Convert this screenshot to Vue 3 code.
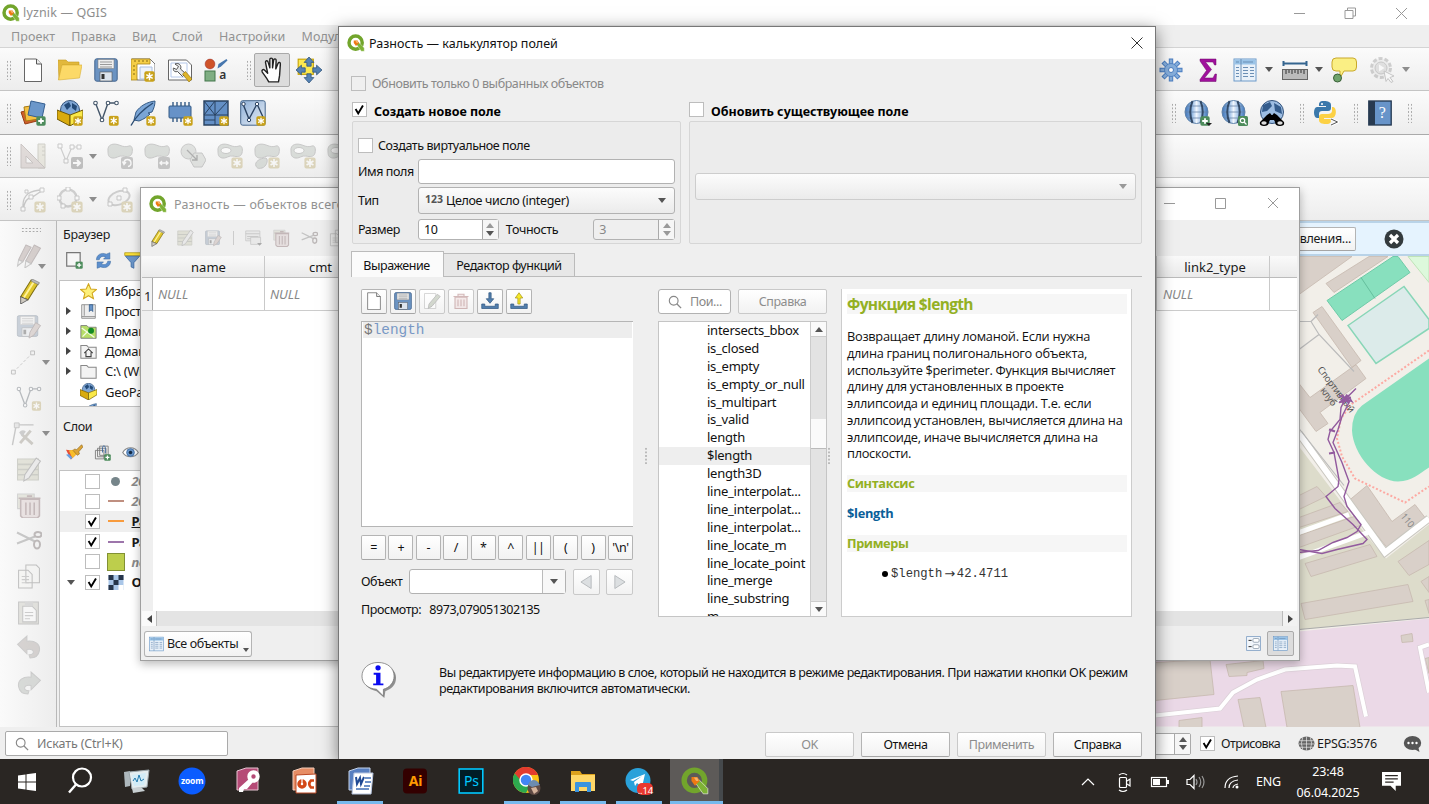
<script setup>
const menu = ['Проект', 'Правка', 'Вид', 'Слой', 'Настройки', 'Модули']
const fileTools = ['page', 'folder', 'save', 'layoutnew', 'layoutman', 'style']
const sourceTools = ['layers', 'gpkg', 'vnew', 'feather', 'chip', 'mesh', 'vlayer']
const shapeTools = ['blobrot', 'blobarr', 'simplify', 'blobring', 'blobpart', 'blobring', 'blobring']
const sideTools = [
  { id: 'pencils', off: true, menu: 'corner' },
  { id: 'pencil' },
  { id: 'saveedit', off: true },
  { id: 'segment', off: true, menu: 'arrow' },
  { id: 'vnew', off: true },
  { id: 'tools', off: true, menu: 'arrow' },
  { id: 'formedit', off: true },
  { id: 'trash', off: true },
  { id: 'cut', off: true },
  { id: 'copy', off: true },
  { id: 'paste', off: true },
  { id: 'undo', off: true },
  { id: 'redo', off: true },
]
const browser = [
  { id: 'star', name: 'Избранное' },
  { id: 'bookmark', name: 'Пространственные', open: true },
  { id: 'mapfolder', name: 'Домашняя', open: true },
  { id: 'home', name: 'Домашняя', open: true },
  { id: 'dir', name: 'C:\\ (Windows)', open: true },
  { id: 'gpkg', name: 'GeoPackage' },
]
const layers = [
  { name: '2024', kind: 'dot', off: true },
  { name: '2024', kind: 'brown', off: true },
  { name: 'Разность', kind: 'orange', on: true, cur: true },
  { name: 'Разность', kind: 'purple', on: true },
  { name: 'поле', kind: 'fill', off: true },
  { name: 'OSM', kind: 'raster', on: true, tree: true },
]
const tableTools = ['pencil', 'formedit', 'saveedit', '|', 'tablemenu', 'trash', 'cut', 'copy']
const exprTools = [
  { id: 'page' }, { id: 'save' }, { id: 'formpen', off: true },
  { id: 'bin', off: true }, { id: 'import' }, { id: 'export' },
]
const operators = ['=', '+', '-', '/', '*', '^', '||', '(', ')', "'\\n'"]
const functions = ['intersects_bbox', 'is_closed', 'is_empty', 'is_empty_or_null', 'is_multipart', 'is_valid', 'length', '$length', 'length3D', 'line_interpolat...', 'line_interpolat...', 'line_interpolat...', 'line_locate_m', 'line_locate_point', 'line_merge', 'line_substring', 'm']
const helpLines = ['Возвращает длину ломаной. Если нужна', 'длина границ полигонального объекта,', 'используйте $perimeter. Функция вычисляет', 'длину для установленных в проекте', 'эллипсоида и единиц площади. Т.е. если', 'эллипсоид установлен, вычисляется длина на', 'эллипсоиде, иначе вычисляется длина на', 'плоскости.']
const tasks = [
  { id: 't-search' }, { id: 't-monitor' }, { id: 't-zoom', cap: 'zoom' }, { id: 't-access' }, { id: 't-ppt' },
  { id: 't-word', run: true }, { id: 't-ai', cap: 'Ai' }, { id: 't-ps', cap: 'Ps' }, { id: 't-chrome', run: true },
  { id: 't-folder', run: true }, { id: 't-telegram', run: true, cap: '..14' }, { id: 'qgis', run: true, active: true },
]
</script>

<template>
  <div class="desktop">
    <svg class="defs" width="0" height="0">
      <defs>
        <linearGradient id="gbox" x1="0" y1="0" x2="1" y2="1"><stop offset="0" stop-color="#8fb0d8" /><stop offset="1" stop-color="#e8eef5" /></linearGradient>
        <linearGradient id="gglobe" x1="0" y1="0" x2="1" y2="0"><stop offset="0" stop-color="#3f74b8" /><stop offset=".3" stop-color="#8db5e2" /><stop offset=".5" stop-color="#f0f6fd" /><stop offset=".75" stop-color="#8db5e2" /><stop offset="1" stop-color="#3f74b8" /></linearGradient>
      </defs>
      <symbol id="badge" viewBox="0 0 9 9"><rect x=".3" y=".3" width="8.4" height="8.4" rx="1.500" fill="#c9a21a" /><path d="M4.500 1.500v6M1.900 3l5.200 3M7.100 3L1.900 6" stroke="#fff" stroke-width="1.200" /></symbol>
      <symbol id="plus" viewBox="0 0 9 9"><rect x=".3" y=".3" width="8.4" height="8.4" rx="1.500" fill="#4d8c5c" /><path d="M4.500 2v5M2 4.500h5" stroke="#fff" stroke-width="1.600" /></symbol>
      <symbol id="qgis" viewBox="0 0 24 24"><circle cx="11.500" cy="11.500" r="8.800" fill="none" stroke="#72a52c" stroke-width="4.600" /><path d="M12 13l3-2.500 8 8v4.500h-4z" fill="#7fb336" stroke="#fff" stroke-width=".5" /><path d="M9 8.500h5l2 3.500-4 4-3-4z" fill="#ee7913" /><path d="M11 9h3l1 3h-2z" fill="#f6b26b" /></symbol>
      <symbol id="page" viewBox="0 0 24 24"><path d="M3.500 1h12l5 5v17.500h-17z" fill="#fff" stroke="#666" /><path d="M15.500 1v5h5" fill="#eee" stroke="#555" /></symbol>
      <symbol id="folder" viewBox="0 0 24 24"><path d="M0 2h8l2 2h11v3H4L1 22z" fill="#e2b83c" stroke="#c79a20" stroke-width=".6" /><path d="M4 7h20l-2.500 13L.5 22z" fill="#fcd967" stroke="#d9ae34" stroke-width=".6" /></symbol>
      <symbol id="save" viewBox="0 0 24 24"><rect x=".8" y=".8" width="22.400" height="22.400" rx="2" fill="#6b93c2" stroke="#44668f" /><rect x="4" y="1.500" width="16" height="9" fill="#eee" stroke="#777" stroke-width=".5" /><path d="M6 4h12M6 6.500h12M6 9h12" stroke="#999" /><rect x="6" y="14" width="12" height="9" fill="#dce4ee" stroke="#555" stroke-width=".6" /><rect x="7.500" y="16" width="3" height="5" fill="#333" /></symbol>
      <symbol id="layoutnew" viewBox="0 0 24 24"><path d="M1 1h18l5 5v16H6z" fill="#fff" stroke="#777" /><path d="M0 1h19v5H6v16H0z" fill="#f5ce46" stroke="#a98518" stroke-width=".8" /><path d="M4 2v2M8 2v2M12 2v2M16 2v2M2 8h2M2 12h2M2 16h2" stroke="#866a13" /><path d="M9 9h12v12H9z" fill="#eef3fb" stroke="#aac0e2" /><use href="#badge" x="13" y="13" width="11" height="11" /></symbol>
      <symbol id="layoutman" viewBox="0 0 24 24"><path d="M.5 2h18l5 5v15H.5z" fill="#fff" stroke="#666" /><path d="M3 5h16v14H3z" fill="#fff" stroke="#b5c8ea" /><path d="M7 6c4-2 7 2 5.500 5l5 4.500-3 3-5-5c-4 1-4.500-2-4-3.500l3 1.500 2-3z" fill="#e6e8ea" stroke="#444" stroke-width=".9" /><path d="M14.500 16l3-2.500 6.500 7.500-3 3z" fill="#dfb52a" stroke="#8d6c0b" stroke-width=".6" /></symbol>
      <symbol id="style" viewBox="0 0 24 24"><circle cx="6" cy="6" r="4.900" fill="#cf5329" stroke="#933" stroke-width=".5" /><path d="M13.500 10.500l1-4.500 8-5 1 1.500-6.500 6z" fill="#4777ae" /><rect x="1" y="13" width="10" height="10" fill="#7fae83" stroke="#43764b" /></symbol>
      <symbol id="hand" viewBox="0 0 24 24"><path d="M9 23c-2-4-4-6-6-9-1-2 1-3 2-2l3 3-2-10c0-2 2-2 2.500 0L10 10V2.500c0-2 2.500-2 2.500 0V10l1-7c.4-2 2.500-1.500 2.300.4L15.500 11l2-5c.8-1.700 2.600-1 2.200.8L19 17l-1 6z" fill="#fff" stroke="#222" stroke-width="1.300" stroke-linejoin="round" /></symbol>
      <symbol id="move" viewBox="0 0 24 24"><rect x="2" y="2" width="14" height="14" fill="#fce94f" stroke="#c4a000" /><path d="M12 0l4.500 5H14v3.500h-4V5H7.500zM12 24l4.500-5H14v-3.500h-4V19H7.500zM0 12l5-4.500V10h3.500v4H5v2.500zM24 12l-5-4.500V10h-3.500v4H19v2.500z" fill="#5583b5" stroke="#2f5379" stroke-width=".7" /></symbol>
      <symbol id="layers" viewBox="0 0 26 26"><path d="M1 12l12-3 4 12-12 3z" fill="#cf5f2b" stroke="#973f14" /><path d="M4 7l13-2 2 14-13 2z" fill="#f5c242" stroke="#a77a13" /><path d="M11 1l14 3-3 14-14-3z" fill="#6b97ca" stroke="#355f91" /><use href="#plus" x="16" y="16" width="10" height="10" /></symbol>
      <symbol id="gpkg" viewBox="0 0 26 26"><circle cx="13" cy="10" r="9.500" fill="#7fa6d4" stroke="#34547c" /><path d="M7 5l5-3 2 4-4 4zM15 3l5 3-1 5-4-3z" fill="#234a77" /><path d="M0 10l13 5v11L0 19z" fill="#d9ab0e" stroke="#6e5705" /><path d="M13 15l13-5v8l-13 8z" fill="#fae948" stroke="#6e5705" /></symbol>
      <symbol id="vnew" viewBox="0 0 26 26"><path d="M2.500 3L9 20l6-17h9" fill="none" stroke="#44566a" stroke-width="1.400" /><g fill="#fff" stroke="#44566a" stroke-width="1.100"><circle cx="2.500" cy="3" r="1.800" /><circle cx="9" cy="20" r="1.800" /><circle cx="15" cy="3" r="1.800" /><circle cx="23.500" cy="3" r="1.800" /></g><use href="#badge" x="15.500" y="15.500" width="10.500" height="10.500" /></symbol>
      <symbol id="feather" viewBox="0 0 26 26"><path d="M25 1C17 2 10 6 6 12l-2 8 5 1c5-2 8-4 11-7l-2-1 4-1c2-4 3-7 3-11z" fill="#7aa5d6" stroke="#345a85" /><path d="M1 25.500C6 16 12 10 23 3" fill="none" stroke="#2b4c73" stroke-width="1.400" /></symbol>
      <symbol id="chip" viewBox="0 0 26 26"><path d="M6 2v20M10 2v20M14 2v20M18 2v20M22 2v20" stroke="#345a85" stroke-width="1.400" /><rect x="2" y="6" width="22" height="12" rx="1" fill="#6792c8" stroke="#345a85" /></symbol>
      <symbol id="mesh" viewBox="0 0 26 26"><path d="M1 1h24v24H1z" fill="#638fc5" stroke="#28415f" stroke-width="1.400" /><path d="M1 15h24M12 1v24M1 1l11 14L25 1M12 1L1 15M1 20h11" stroke="#28415f" fill="none" /></symbol>
      <symbol id="vlayer" viewBox="0 0 26 26"><rect x=".7" y=".7" width="24.500" height="24.500" rx="2" fill="url(#gbox)" stroke="#45658b" /><path d="M3 4l6 15L17 4l6 13" fill="none" stroke="#2c4362" stroke-width="1.400" /><g fill="#fff" stroke="#2c4362"><circle cx="3.500" cy="4" r="1.700" /><circle cx="9" cy="20" r="1.700" /><circle cx="17" cy="4" r="1.700" /></g></symbol>
      <symbol id="ruler3" viewBox="0 0 26 26"><path d="M18 1h7v24H18z" fill="#d5cfa5" stroke="#8f8b66" /><path d="M22 4h3M22 8h3M22 12h3" stroke="#8f8b66" /><path d="M1 1v24h24z" fill="#c8a9a0" stroke="#8a6e66" /><path d="M6 13v7h7z" fill="#f5f5f5" stroke="#8a6e66" /></symbol>
      <symbol id="vmove" viewBox="0 0 26 26"><path d="M3 3l6 15 6-14h8" fill="none" stroke="#888" stroke-width="1.200" /><g fill="#fff" stroke="#777"><path d="M1 1h4v4H1zM7 16h4v4H7zM13 2h4v4h-4zM20 2h4v4h-4z" /></g><rect x="14" y="14" width="12" height="12" rx="2" fill="#666" /><path d="M16 20h7m-3-3l3 3-3 3" stroke="#fff" stroke-width="2" fill="none" /></symbol>
      <symbol id="blob" viewBox="0 0 26 26"><path d="M1 8C0 1 7 0 12 2s7 2 10 1 4 3 3 7-5 4-9 3-7 3-11 2-4-4-4-7z" fill="#a3b5a2" stroke="#777" /></symbol>
      <symbol id="blobrot" viewBox="0 0 26 26"><use href="#blob" width="26" height="26" /><rect x="14" y="14" width="12" height="12" rx="2" fill="#777" /><path d="M17 20a3.500 3.500 0 1 1 4 3.500M15.500 18.500l1.500 3 2-2.500" stroke="#fff" fill="none" stroke-width="1.400" /></symbol>
      <symbol id="blobarr" viewBox="0 0 26 26"><use href="#blob" width="26" height="26" /><rect x="14" y="14" width="12" height="12" rx="2" fill="#777" /><path d="M16 20h8M18 18l-2 2 2 2M22 18l2 2-2 2" stroke="#fff" fill="none" stroke-width="1.400" /></symbol>
      <symbol id="simplify" viewBox="0 0 26 26"><circle cx="8.500" cy="8.500" r="7.500" fill="#b3bdb0" stroke="#777" /><path d="M14 10h8l4 7-4 7h-8l-4-7z" fill="#b9c4b6" stroke="#777" /><path d="M7 7l10 10m0-5v5h-5" fill="none" stroke="#333" stroke-width="1.300" /></symbol>
      <symbol id="blobring" viewBox="0 0 26 26"><use href="#blob" width="26" height="26" /><ellipse cx="9" cy="7.500" rx="5" ry="3" fill="#fff" stroke="#777" /><use href="#badge" x="14" y="14" width="12" height="12" /></symbol>
      <symbol id="blobpart" viewBox="0 0 26 26"><use href="#blob" width="26" height="26" /><path d="M2 23c-2-4 4-8 10-8 3 2 0 9-4 10s-5 0-6-2z" fill="#a3b5a2" stroke="#777" /><use href="#badge" x="14" y="14" width="12" height="12" /></symbol>
      <symbol id="curve" viewBox="0 0 26 26"><path d="M3 24V18C3 8 10 3 23 3M3 22c2-8 4-11 8-11L23 3" fill="none" stroke="#777" stroke-width="1.300" /><path d="M1 20h4v4H1zM9 8h4v4H9zM20 1h4v4h-4zM5 3h3v3H5z" fill="#fff" stroke="#777" /><use href="#badge" x="14" y="14" width="12" height="12" /></symbol>
      <symbol id="circ" viewBox="0 0 26 26"><circle cx="11" cy="11" r="8.500" fill="#eee" stroke="#888" stroke-width="2.500" /><path d="M9 0h4v4H9zM0 9h4v4H0zM18 9h4v4h-4zM4 17h4v4H4z" fill="#fff" stroke="#777" /><use href="#badge" x="14" y="14" width="12" height="12" /></symbol>
      <symbol id="elli" viewBox="0 0 26 26"><ellipse cx="12" cy="11" rx="11" ry="6.500" transform="rotate(-20 12 11)" fill="#eee" stroke="#888" stroke-width="2" /><path d="M10 9h4v4h-4zM1 15h4v4H1zM16 1h4v4h-4z" fill="#fff" stroke="#777" /><use href="#badge" x="14" y="14" width="12" height="12" /></symbol>
      <symbol id="gear" viewBox="0 0 24 24"><path d="M12 .5v23M.5 12h23M4 4l16 16M20 4L4 20" stroke="#4a7dc0" stroke-width="4.400" /><path d="M12 1.500v21M1.500 12h21M4.700 4.700l14.600 14.600M19.300 4.700L4.700 19.300" stroke="#86aedb" stroke-width="2.600" /><circle cx="12" cy="12" r="6.500" fill="#86aedb" stroke="#4a7dc0" stroke-width=".8" /><circle cx="12" cy="12" r="2.500" fill="#fff" stroke="#4a7dc0" /></symbol>
      <symbol id="sigma" viewBox="0 0 24 24"><path d="M4 1h16v6h-1.500L17 4H9.500l6 7.500L8.500 20H17l2-4h1.500L20 23.500H4v-2l6.500-9L4 3z" fill="#a0109c" stroke="#6d0a6b" stroke-width=".5" /></symbol>
      <symbol id="table" viewBox="0 0 24 24"><rect x="1" y="1" width="22" height="22" fill="#e9f1f9" stroke="#6c9ac9" /><rect x="1.500" y="1.500" width="21" height="5" fill="#9ac4e8" /><path d="M8 1v22M3 4h3M10 4h10M3 9.500h3M10 9.500h5M17 9.500h4M3 12.500h3M10 12.500h5M17 12.500h4M3 15.500h3M10 15.500h5M17 15.500h4M3 18.500h3M10 18.500h5M17 18.500h4" stroke="#6b8fb5" /></symbol>
      <symbol id="measure" viewBox="0 0 26 24"><path d="M1 5.500h24M1.500 3v5M24.500 3v5" stroke="#34658f" stroke-width="2" /><rect x=".5" y="11.500" width="25" height="10" fill="#bbb" stroke="#666" /><path d="M4 12v4M7 12v3M10 12v4M13 12v3M16 12v4M19 12v3M22 12v4" stroke="#333" /></symbol>
      <symbol id="tip" viewBox="0 0 26 26"><path d="M5 1h17q3.500 0 3.500 4v5q0 4-3.500 4H13l-4 7v-7H5q-4 0-4-4V5q0-4 4-4z" fill="#faef84" stroke="#c9a92a" /><circle cx="6.500" cy="21" r="4" fill="#6fa36c" stroke="#3a6038" /></symbol>
      <symbol id="action" viewBox="0 0 26 26"><circle cx="12" cy="11" r="9.500" fill="#ddd" stroke="#888" stroke-width="3" stroke-dasharray="4 2" /><circle cx="12" cy="11" r="6" fill="#bbb" stroke="#777" /><path d="M10 7.500l5.500 3.500-5.500 3.500z" fill="#fff" /><path d="M15 14l10 5-4 1.500 3 4-2 1-3-4-2 3z" fill="#fff" stroke="#777" /></symbol>
      <symbol id="globe" viewBox="0 0 26 26"><circle cx="12.500" cy="12" r="11.500" fill="url(#gglobe)" stroke="#5f83ab" /><path d="M3 6h19M1 12h23M3 18h19" stroke="#6a86a8" stroke-width=".8" fill="none" /><path d="M8.500 1.200q-4.500 10.800 0 21.600M16.500 1.200q4.500 10.800 0 21.600" fill="none" stroke="#334a66" stroke-width="2" /></symbol>
      <symbol id="globeadd" viewBox="0 0 28 26"><use href="#globe" width="26" height="26" /><use href="#plus" x="16" y="16" width="10" height="10" /><path d="M22 23h6l-3 3z" fill="#222" /></symbol>
      <symbol id="globefind" viewBox="0 0 28 26"><use href="#globe" width="26" height="26" /><rect x="17" y="16" width="10" height="10" rx="1.500" fill="#4d8c5c" /><circle cx="21.500" cy="20.500" r="2.200" fill="none" stroke="#fff" stroke-width="1.200" /><path d="M23 22l2.500 2.500" stroke="#fff" stroke-width="1.300" /></symbol>
      <symbol id="binoc" viewBox="0 0 26 26"><circle cx="13" cy="12" r="11.500" fill="#9dbde2" stroke="#31517a" /><path d="M4 5l7-3 2 4-5 5-5 1zM15 3l7 4 1 7-7-3z" fill="#345c8c" /><path d="M8 15l3-2 1.500 2h1L15 13l3 2 7 7q1 4-4 4t-5-4l-1-2h-4l-1 2q0 4-5 4t-4-4z" fill="#000" /><ellipse cx="5" cy="23" rx="2.700" ry="1.700" fill="#ddd" /><ellipse cx="21" cy="23" rx="2.700" ry="1.700" fill="#ddd" /></symbol>
      <symbol id="python" viewBox="0 0 26 26"><path d="M11 1c-5 0-5 2-5 5h7v1H4c-4 0-4 11 0 11h2v-4c0-2 1-3 3-3h6c2 0 3-1 3-3V5c0-3-3-4-7-4z" fill="#3a78ab" /><path d="M13 24c5 0 5-2 5-5h-7v-1h8c5 0 5-11 1-11h-1v4c0 2-2 3-4 3H9c-2 0-3 1-3 3v3c0 3 3 4 7 4z" fill="#fcd144" /><circle cx="9" cy="4" r="1" fill="#fff" /><path d="M18 19l6.500 3-6.500 3" fill="none" stroke="#fff" stroke-width="3" /><path d="M18 19l6.500 3-6.500 3" fill="none" stroke="#555" /></symbol>
      <symbol id="book" viewBox="0 0 24 26"><rect x=".8" y="1" width="22.400" height="24" fill="#6894c9" stroke="#22364e" stroke-width="1.300" /><rect x="1" y="1" width="6" height="24" fill="#283a50" /></symbol>
      <symbol id="pencil" viewBox="0 0 24 24"><path d="M14 1l7 3L11 20l-7-3z" fill="#e0c62c" stroke="#7d6d13" /><path d="M16.500 3L7 18" stroke="#fff29a" stroke-width="1.800" /><path d="M15 0l7 3.500-1 2-7-3.500z" fill="#bbb" stroke="#777" stroke-width=".6" /><path d="M4 17l7 3-7 4z" fill="#cfcac0" stroke="#555" stroke-width=".8" /></symbol>
      <symbol id="pencils" viewBox="0 0 24 24"><path d="M9 2l5 2-8 14-4-2zM17 2l6 3-9 15-5-3z" fill="#b18a80" stroke="#755" /><path d="M2 16l4 2-5 4zM9 17l5 3-6 4z" fill="#eee" stroke="#777" /></symbol>
      <symbol id="saveedit" viewBox="0 0 26 26"><use href="#save" x="0" y="1" width="23" height="23" /><path d="M20 9l5 3-7 10-5 3 1-6z" fill="#c9a095" stroke="#755" /></symbol>
      <symbol id="segment" viewBox="0 0 26 26"><path d="M3 23L23 3" stroke="#777" stroke-dasharray="3 2" /><path d="M1 21h4v4H1zM21 1h4v4h-4z" fill="#eee" stroke="#666" /></symbol>
      <symbol id="tools" viewBox="0 0 26 26"><path d="M2 25L6 4h18" fill="none" stroke="#777" stroke-width="1.500" /><path d="M4 2h5v5H4z" fill="#ccc" stroke="#777" /><path d="M12 14l11 10M21 10L10 23" stroke="#8f8468" stroke-width="3" /><path d="M9 12q3-4 7-1l-4 5z" fill="#888" /></symbol>
      <symbol id="formedit" viewBox="0 0 24 24"><path d="M1 2h20v20H1z" fill="#c4c592" stroke="#8b8f6d" /><path d="M1 7h20M1 12h20M1 17h20" stroke="#8b8f6d" stroke-width="1.600" /><path d="M19 1l4 3L12 20l-5 3 1-6z" fill="#ddd" stroke="#666" /></symbol>
      <symbol id="formpen" viewBox="0 0 24 24"><path d="M2 2h15v20H2z" fill="#fff" stroke="#999" /><path d="M19 3l4 3L12 19l-5 3 1-6z" fill="#aeb8a5" stroke="#777" /></symbol>
      <symbol id="trash" viewBox="0 0 24 24"><path d="M1 1h16v14H1z" fill="#c9cda4" stroke="#999" /><path d="M4 6h18v16l-2 2H6l-2-2zM2 5h21M10 3h5" fill="#e3bdbd" stroke="#8f4f55" stroke-width="1.500" /><path d="M9 9v12M13 9v12M17 9v12" stroke="#8f4f55" stroke-width="1.500" /></symbol>
      <symbol id="bin" viewBox="0 0 24 24"><path d="M4 7h16v15H4zM2 6h20M8 6V3h8v3" fill="#efdada" stroke="#a77" stroke-width="1.500" /><path d="M8 10v9M12 10v9M16 10v9" stroke="#a77" stroke-width="1.500" /></symbol>
      <symbol id="cut" viewBox="0 0 26 24"><path d="M1 4l18 9M1 15l18-7" stroke="#777" stroke-width="2" /><ellipse cx="22" cy="6" rx="3.500" ry="2.500" fill="none" stroke="#6c5555" stroke-width="2" /><ellipse cx="21" cy="16" rx="3" ry="4" fill="none" stroke="#6c5555" stroke-width="2" /></symbol>
      <symbol id="copy" viewBox="0 0 24 24"><path d="M9 1h10l3 3v14H9zM2 6h9l4 4v13H2z" fill="#f5f5ef" stroke="#666" /><path d="M5 12h7M5 15h7M5 18h7" stroke="#888" /></symbol>
      <symbol id="paste" viewBox="0 0 24 24"><path d="M2 2h19v21H2z" fill="#c5c2ac" stroke="#777" /><path d="M6 6h9l4 4v11H6z" fill="#fff" stroke="#777" /><path d="M8 2h8v4H8z" fill="#aaa" /><path d="M8 12h8M8 15h8M8 18h5" stroke="#888" /></symbol>
      <symbol id="undo" viewBox="0 0 24 24"><path d="M1 9L10 1v5c8-1 13 3 12 9s-5 7-9 7l-1-3c4 0 4.500-2 4-3.500s-3-2.500-6-1.500v4z" fill="#a8958c" stroke="#888" /></symbol>
      <symbol id="redo" viewBox="0 0 24 24"><path d="M23 9L14 1v5C6 5 1 9 2 15s5 7 9 7l1-3c-4 0-4.500-2-4-3.500s3-2.500 6-1.500v4z" fill="#a0ada0" stroke="#888" /></symbol>
      <symbol id="addlayer" viewBox="0 0 24 24"><path d="M1 1h19v19H1z" fill="#f6f6f6" stroke="#777" stroke-width="1.700" /><use href="#plus" x="13" y="13" width="11" height="11" /></symbol>
      <symbol id="refresh" viewBox="0 0 24 24"><path d="M2 11C2 4 9 0 16 3l5-2v9h-9l3-3c-5-2-8 0-9 4zM22 13c0 7-7 11-14 8l-5 2v-9h9l-3 3c5 2 8 0 9-4z" fill="#5c8fce" stroke="#34639c" stroke-width=".7" /></symbol>
      <symbol id="filter" viewBox="0 0 24 24"><path d="M1 1h22v4H1z" fill="#f8df39" stroke="#ab9410" /><path d="M2 6h20l-8 9v8l-4-2v-6z" fill="#6a94c7" stroke="#34639c" /></symbol>
      <symbol id="star" viewBox="0 0 20 20"><path d="M10 1l2.700 6 6.600.6-5 4.400 1.500 6.500L10 15l-5.800 3.500L5.700 12l-5-4.400 6.600-.6z" fill="#fdf07a" stroke="#d2a71f" stroke-width="1.300" /></symbol>
      <symbol id="bookmark" viewBox="0 0 20 20"><path d="M2 2h16v16H2z" fill="#eee" stroke="#888" /><path d="M5 2v13M2 16h16" stroke="#888" /><path d="M11 2h4v8l-2-2-2 2z" fill="#6794c9" stroke="#355d8c" /></symbol>
      <symbol id="mapfolder" viewBox="0 0 20 20"><path d="M1 3h7l2 2h9v13H1z" fill="#b7de68" stroke="#777" /><path d="M2 6l15 11M3 16l6-6" stroke="#f5fae8" stroke-width="1.500" /><circle cx="13" cy="9" r="3.500" fill="#148a25" /></symbol>
      <symbol id="dir" viewBox="0 0 20 20"><path d="M1 3h7l2 2h9v13H1z" fill="#f3f3f3" stroke="#888" stroke-width="1.200" /></symbol>
      <symbol id="home" viewBox="0 0 20 20"><use href="#dir" width="20" height="20" /><path d="M5 12l5-5 5 5M7 11v5h6v-5" fill="none" stroke="#444" stroke-width="1.300" /></symbol>
      <symbol id="brush" viewBox="0 0 24 24"><path d="M0 8l9 1 5 6-7 7z" fill="#e94e35" /><path d="M4 9l6-1 5 6-6 6z" fill="#f8bd2b" /><path d="M10 9l2-2 3 1L22 1l2 3-6 7 1 3-3 2z" fill="#dca436" stroke="#865d13" stroke-width=".8" /><path d="M0 15l4-1 5 5-2 3z" fill="#6a9fe0" /></symbol>
      <symbol id="group" viewBox="0 0 24 24"><path d="M2 9h12v12H2zM5 6h12v12H5zM8 3h12v13H8z" fill="#eee" stroke="#777" stroke-width="1.200" /><path d="M12 12V5c0-3 4-3 4 0v8" fill="none" stroke="#34639c" stroke-width="1.200" /><use href="#plus" x="14" y="14" width="10" height="10" /></symbol>
      <symbol id="eye" viewBox="0 0 24 24"><path d="M1 12c5-9 17-9 22 0-5 8-17 8-22 0z" fill="#fff" stroke="#888" stroke-width="1.500" /><circle cx="12" cy="12" r="5.500" fill="#6794c9" stroke="#34639c" /><circle cx="12" cy="12" r="2.500" fill="#152b44" /></symbol>
      <symbol id="tablemenu" viewBox="0 0 24 24"><path d="M1 2h20v14H1z" fill="#ddd" stroke="#777" /><path d="M1 6h20M3 10h16M3 13h16" stroke="#888" stroke-width="1.500" /><path d="M8 11h14v10H8z" fill="#ddd" stroke="#777" /><path d="M17 19h7l-3.500 4z" fill="#333" /></symbol>
      <symbol id="import" viewBox="0 0 24 24"><path d="M1 16h4v3h14v-3h4v6H1z" fill="#517ead" stroke="#335a83" /><path d="M10.500 1h3v8h3.500l-5 6-5-6h3.500z" fill="#517ead" stroke="#335a83" /></symbol>
      <symbol id="export" viewBox="0 0 24 24"><path d="M1 16h4v3h14v-3h4v6H1z" fill="#517ead" stroke="#335a83" /><path d="M10.500 16h3V8h3.500l-5-7-5 7h3.500z" fill="#f7e928" stroke="#a8971a" /></symbol>
      <symbol id="form" viewBox="0 0 24 24"><rect x="1" y="1" width="22" height="22" fill="#f2f6fb" stroke="#7c9dc2" stroke-width="1.300" /><rect x="11" y="4" width="10" height="6" rx="2" fill="#fff" stroke="#6d7f92" /><rect x="11" y="14" width="10" height="6" rx="2" fill="#fff" stroke="#6d7f92" /><path d="M4 7h5M4 17h5" stroke="#333" stroke-width="1.600" /></symbol>
      <symbol id="lens" viewBox="0 0 16 16"><circle cx="6.500" cy="6.500" r="5" fill="none" stroke="#888" stroke-width="1.300" /><path d="M10 10l5 5" stroke="#888" stroke-width="1.500" /></symbol>
      <symbol id="grayglobe" viewBox="0 0 18 16"><ellipse cx="9" cy="8" rx="8.500" ry="7.500" fill="#666" /><path d="M1 5h16M1 8.500h16M2 12h14M9 .5v15M5 1.500q-3 6 0 13M13 1.500q3 6 0 13" stroke="#eee" stroke-width=".7" fill="none" /></symbol>
      <symbol id="chat" viewBox="0 0 18 18"><ellipse cx="9" cy="8" rx="8.700" ry="7" fill="#555" /><path d="M9 13h6l1 4z" fill="#555" /><circle cx="5" cy="8" r="1.200" fill="#fff" /><circle cx="9" cy="8" r="1.200" fill="#fff" /><circle cx="13" cy="8" r="1.200" fill="#fff" /></symbol>

      <symbol id="t-search" viewBox="0 0 28 28"><circle cx="16" cy="10.500" r="9" fill="none" stroke="#fff" stroke-width="2.200" /><path d="M10 17.500l-7 8" stroke="#fff" stroke-width="2.400" /></symbol>
      <symbol id="t-monitor" viewBox="0 0 28 28"><path d="M2 5l6-1v15l-5 1z" fill="#aeb8bd" /><path d="M7 5l20-2-2 17-15 2z" fill="#e4edf0" stroke="#9aa5aa" /><path d="M10 8l14-2-2 12-10 1z" fill="#d2ecf7" /><path d="M11 14l2-3 2 4 2-7 2 6 3-2" fill="none" stroke="#237aae" /><path d="M10 21l9-1 4 4-12 2z" fill="#c8cfd2" /></symbol>
      <symbol id="t-zoom" viewBox="0 0 28 28"><circle cx="14" cy="14" r="13.500" fill="#0b5cff" /></symbol>
      <symbol id="t-access" viewBox="0 0 28 28"><path d="M3 4l9-3h12v22H3z" fill="#b54a76" stroke="#e8c5d3" /><circle cx="19.500" cy="9.500" r="4.200" fill="none" stroke="#fff" stroke-width="4" /><path d="M15 12L5 21v4h4l1-3h3l6-7z" fill="#fff" /></symbol>
      <symbol id="t-ppt" viewBox="0 0 28 28"><path d="M3 4l9-3h12v22H3z" fill="#e68d65" stroke="#f3cdbb" /><path d="M6 8l20-1v19H6z" fill="#fff" stroke="#bb4824" /><circle cx="12" cy="17" r="3" fill="none" stroke="#d34817" stroke-width="3.500" /><path d="M12 17V11" stroke="#fff" stroke-width="1.200" /><path d="M24 13.500h-3q-3.500 3.500 0 7h3" fill="none" stroke="#d34817" stroke-width="2.600" /></symbol>
      <symbol id="t-word" viewBox="0 0 28 28"><path d="M3 4l9-3h12v22H3z" fill="#587fc0" stroke="#c5d4ec" /><path d="M8 6h19l-2 21H6z" fill="#fff" stroke="#b6c5e0" /><path d="M10 10l1 7 3-6 1 6 3-7" fill="none" stroke="#204a94" stroke-width="2" /><path d="M19 11h6M19 15h6M18 19h6M10 22h13" stroke="#3f6db5" stroke-width="1.600" /></symbol>
      <symbol id="t-ai" viewBox="0 0 28 28"><rect x="2" y="1.500" width="24" height="25" rx="4" fill="#330000" /></symbol>
      <symbol id="t-ps" viewBox="0 0 28 28"><rect x="2.200" y="2" width="23.600" height="24" fill="#001d26" stroke="#00c8ff" stroke-width="1.600" /></symbol>
      <symbol id="t-chrome" viewBox="0 0 28 28"><circle cx="13" cy="13" r="13" fill="#fbc116" /><path d="M1.700 6.500A13 13 0 0 1 25 8H13l-5 9z" fill="#e33b2e" /><path d="M1.700 6.500A13 13 0 0 0 13 26l5-9-6 1z" fill="#2da94f" /><circle cx="13" cy="13" r="6" fill="#4285f4" stroke="#fff" stroke-width="1.500" /><ellipse cx="21" cy="21" rx="6.500" ry="7" fill="#5f4a44" /><path d="M15 18q3-7 9-4l3 4-8 2z" fill="#6d8cb0" /><path d="M18 21l5-1 2 4-4 3z" fill="#d5b49d" /></symbol>
      <symbol id="t-folder" viewBox="0 0 28 28"><path d="M2 4h9l2 3h13v5H2z" fill="#dda21e" /><path d="M2 8h24v16H2z" fill="#ffd768" /><path d="M6 25v-9q0-1 1-1h14q1 0 1 1v9h-4v-5h-8v5z" fill="#3b94df" /></symbol>
      <symbol id="t-telegram" viewBox="0 0 28 28"><circle cx="13" cy="13.500" r="12.500" fill="#2aa1da" /><path d="M5 13l15-6-3 13-5-4-2 3-1-4 8-6-9 5z" fill="#fff" /><rect x="12" y="16" width="16" height="12" rx="5" fill="#e8382f" /></symbol>
    </svg>

    <section class="main">
      <header class="mtitle">
        <svg class="q18"><use href="#qgis" /></svg><span class="mt">lyznik — QGIS</span>
        <svg class="winctl" viewBox="0 0 130 24"><path d="M8 12.500h11M110 7l11 11M121 7l-11 11M59 9.500h8v8h-8zM61.500 9.500v-2.500h8v8h-2.500" fill="none" stroke="#999" /></svg>
      </header>
      <nav class="menu"><span v-for="m in menu" :key="m">{{ m }}</span></nav>

      <div class="bar r1">
        <i class="grip" />
        <span v-for="t in fileTools" :key="t" class="slot"><svg><use :href="'#' + t" /></svg><small v-if="t === 'style'" class="glyph-a">a</small></span>
        <i class="grip g2" />
        <span class="slot pressed"><svg class="big"><use href="#hand" /></svg></span>
        <span class="slot"><svg class="big"><use href="#move" /></svg></span>
        <span class="slot late"><svg><use href="#pencil" /></svg></span>
        <div class="right">
          <span class="slot"><svg><use href="#gear" /></svg></span>
          <span class="slot"><svg><use href="#sigma" /></svg></span>
          <span class="slot"><svg><use href="#table" /></svg></span><b class="dd" />
          <span class="slot"><svg class="big"><use href="#measure" /></svg></span><b class="dd" />
          <span class="slot"><svg class="big"><use href="#tip" /></svg></span>
          <span class="slot off"><svg class="big"><use href="#action" /></svg></span><b class="dd dim" />
        </div>
      </div>
      <div class="bar r2">
        <i class="grip" />
        <span v-for="t in sourceTools" :key="t" class="slot"><svg class="big"><use :href="'#' + t" /><use v-if="!['layers', 'vnew'].includes(t)" href="#badge" x="16" y="16" width="10" height="10" /></svg></span>
        <div class="right">
          <i class="grip" />
          <span class="slot"><svg class="huge"><use href="#globeadd" /></svg></span>
          <span class="slot"><svg class="huge"><use href="#globefind" /></svg></span>
          <span class="slot"><svg class="huge"><use href="#binoc" /></svg></span>
          <i class="grip" /><span class="slot"><svg class="big"><use href="#python" /></svg></span>
          <i class="grip" /><span class="slot"><svg class="big"><use href="#book" /></svg><small class="glyph-q">?</small></span>
          <i class="grip" />
        </div>
      </div>
      <div class="bar r3">
        <i class="grip" />
        <span class="slot off"><svg class="big"><use href="#ruler3" /></svg></span>
        <span class="slot off"><svg class="big"><use href="#vmove" /></svg></span><b class="dd dim" />
        <span v-for="(t, i) in shapeTools" :key="i" class="slot off"><svg class="big"><use :href="'#' + t" /></svg></span>
      </div>
      <div class="bar r4">
        <i class="grip" />
        <span class="slot off"><svg class="big"><use href="#curve" /></svg></span>
        <span class="slot off"><svg class="big"><use href="#circ" /></svg></span><b class="dd dim" />
        <span class="slot off"><svg class="big"><use href="#elli" /></svg></span>
      </div>

      <div class="work">
        <aside class="side">
          <i class="hgrip" />
          <span v-for="s in sideTools" :key="s.id" class="st" :class="s.menu">
            <svg :class="{ faint: s.off }"><use :href="'#' + s.id" /></svg><b v-if="s.menu" class="dd dim" />
          </span>
        </aside>
        <div class="panels">
          <h4>Браузер</h4>
          <div class="ptools"><svg><use href="#addlayer" /></svg><svg><use href="#refresh" /></svg><svg><use href="#filter" /></svg></div>
          <ul class="tree">
            <li v-for="(b, i) in browser" :key="i"><b class="rt" :class="{ none: !b.open }" /><svg><use :href="'#' + b.id" /></svg>{{ b.name }}</li>
            <li><b class="rt none" /><svg><use href="#feather" /></svg></li>
          </ul>
          <h4 class="lh">Слои</h4>
          <div class="ptools two"><svg><use href="#brush" /></svg><svg><use href="#group" /></svg><svg><use href="#eye" /></svg></div>
          <ul class="layers">
            <li v-for="(l, i) in layers" :key="i" :class="{ cur: l.cur, gone: l.off }">
              <b class="dd" :class="{ none: !l.tree }" /><i class="ck"><svg v-if="l.on" viewBox="0 0 15 15"><path d="M3 7l3 5 5.500-9" /></svg></i>
              <svg v-if="l.kind === 'raster'" class="sym" viewBox="0 0 15 15"><path d="M0 0h15v15H0z" fill="#a9c6e8" /><path d="M0 0h5v5H0zM10 0h5v5h-5zM5 5h5v5H5zM0 10h5v5H0z" fill="#26354a" /><path d="M10 10h5v5h-5z" fill="#fff" /></svg>
              <i v-else class="sym" :class="l.kind" /><span>{{ l.name }}</span>
            </li>
          </ul>
        </div>
        <div class="canvas">
          <div class="msg"><button>Обновления...</button><svg viewBox="0 0 20 20"><circle cx="10" cy="10" r="9.500" fill="#333a3d" /><path d="M6 6l8 8M14 6l-8 8" stroke="#fff" stroke-width="3.200" /></svg></div>
          <svg class="map" viewBox="1155 257 274 470">
            <path d="M1155 257h274v470h-274z" fill="#f2efe9" />
            <path d="M1408 257h21v26z" fill="#ddf9dc" stroke="#bfe3b8" />
            <path d="M1299 447l70 92 17 20 43-34v93l-130 12z" fill="#dddccb" />
            <g fill="#d9d0c9" stroke="#c6b9af" stroke-width=".8">
              <path d="M1299 257h53l-53 38zM1326 284l43-27h19l-54 36zM1313 313l9-6 39 54-9 7zM1356 365l10 14-46 34 8 11-12 8-17-23v-25l11 14zM1349 501l18-15 25 36 23-17 10 13-38 30zM1299 496l18-9 9 10-27 13zM1299 518l41-15 8 9-49 16zM1299 536l58-20 6 9-64 23zM1305 564l65-19 7 12-66 20zM1301 604l107-19 5 17-108 18zM1398 562l31-21v24l-20 11zM1421 582l8-5v16zM1425 601l4-1v14z" />
            </g>
            <path d="M1299 434l86 119 44-34" fill="none" stroke="#cac8c0" stroke-width="8" /><path d="M1299 434l86 119 44-34" fill="none" stroke="#fff" stroke-width="6" />
            <path d="M1299 533l50-18M1299 558l69-25" stroke="#fff" stroke-width="5" />
            <path d="M1299 322h12l8 13 35 37M1311 322l7-7M1299 350l20-15M1299 429l45 57" fill="none" stroke="#bbb" stroke-width="1.200" />
            <path d="M1327 301l66-44h5l12 16-68 48z" fill="#88e0be" stroke="#70cba9" /><path d="M1361 278l14 21" stroke="#65bf9d" />
            <path d="M1348 326l56-39 25 33v9l-53 35z" fill="#dcebea" stroke="#88d6b7" stroke-width="1.500" />
            <path d="M1429 359l-67 47q-10 8-10 25c1 24 25 51 46 51 15-1 20-7 31-14z" fill="#88e0be" />
            <path d="M1429 351l-78 54-10 14-4 20 5 18 13 22 50 24 24-16" fill="none" stroke="#fda9a2" stroke-width="2" stroke-dasharray="2 2" />
            <path d="M1155 633l144-1 130-13v108h-274z" fill="#ebd9e7" /><path d="M1299 630l130-12" stroke="#aaa" />
            <g fill="#d9d0c9" stroke="#c6b9af" stroke-width=".8">
              <path d="M1155 663l55-3 4 35-59 6zM1226 665l37-4 1 8-17 4v3l-18 1zM1238 700l22-2 6 30h-22zM1281 692l72-6 7 42h-73zM1179 721l23-3v10h-23zM1401 636l11-2 1 8-11 1zM1425 659l4-1v16z" />
            </g>
            <path d="M1155 716l65-7 13-16 24-13 28-10 52-4 18 1 11 50M1429 645l-9 3 9 45" fill="none" stroke="#dcd0d8" stroke-width="5.500" /><path d="M1155 716l65-7 13-16 24-13 28-10 52-4 18 1 11 50M1429 645l-9 3 9 45" fill="none" stroke="#fff" stroke-width="4" />
            <g font-family="Noto Sans" font-size="9.500" fill="#555"><text transform="translate(1317 370) rotate(53)">Спортивный</text><text transform="translate(1320 391) rotate(53)">клуб</text><text transform="translate(1400 517) rotate(50)" fill="#888">110</text></g>
            <g fill="none" stroke="#925a9e" stroke-width="1.400"><path d="M1356 389l-11 11-4 8-1 12-10 12-2 8 6 13 5 27-1 7-12 10 9 12 18 16 14 15-4 4-26 6-15 4-23-4" /><path d="M1339 396l13 6-4-6-9 7 11-2-8 16-4 13-5 13 9 20 7 19-5 15 3 10 14 18-4 7-10 6-14 5-15 8-20 2" /><path d="M1342 395l7 9M1347 395l-4 9M1351 398l-10 3M1329 430l6 2-5-2M1329 454l6-1" stroke-width="2" /></g>
          </svg>
        </div>
      </div>
      <footer class="status">
        <div class="find"><svg><use href="#lens" /></svg>Искать (Ctrl+K)</div>
        <div class="sr"><div class="scale"><span class="spin"><b class="up" /><b class="dd" /></span></div><i class="ck"><svg viewBox="0 0 15 15"><path d="M3 7l3 5 5.500-9" /></svg></i><span class="ot">Отрисовка</span><svg class="gg"><use href="#grayglobe" /></svg><span class="epsg">EPSG:3576</span><svg class="ch"><use href="#chat" /></svg></div>
      </footer>
    </section>

    <section class="attr">
      <header><svg class="q18"><use href="#qgis" /></svg><span>Разность — объектов всего: 1</span><svg class="actl" viewBox="0 0 130 32"><path d="M8 15.500h11M59.500 10.500h10v10h-10zM112 10l10 10M122 10l-10 10" fill="none" stroke="#999" /></svg></header>
      <div class="atools"><template v-for="(t, i) in tableTools" :key="i"><i v-if="t === '|'" class="vs" /><svg v-else :class="{ faint: i > 0 }"><use :href="'#' + t" /></svg></template></div>
      <div class="thead"><i class="corner" /><span>name</span><span>cmt</span><span class="flex" /><span class="lt">link2_type</span><span class="end" /></div>
      <div class="trow"><i>1</i><span>NULL</span><span>NULL</span><span class="flex" /><span class="lt">NULL</span><span class="end" /></div>
      <div class="tbody" />
      <div class="hs"><b class="lt-arrow" /><i /><b class="rt-arrow" /></div>
      <div class="afoot"><button><svg><use href="#table" /></svg>Все объекты<b class="dd" /></button><div><svg><use href="#form" /></svg><span><svg><use href="#table" /></svg></span></div></div>
    </section>

    <section class="dlg">
      <header><svg class="q18"><use href="#qgis" /></svg><span>Разность — калькулятор полей</span><svg class="dx" viewBox="0 0 12 12"><path d="M.5.5l11 11M11.500.5l-11 11" stroke="#333" stroke-width="1" /></svg></header>
      <div class="dbody">
        <label class="upd"><i class="ck dis" />Обновить только 0 выбранных объектов</label>
        <div class="groups">
          <div class="grp one">
            <label class="gl"><i class="ck"><svg viewBox="0 0 15 15"><path d="M3 7l3 5 5.500-9" /></svg></i>Создать новое поле</label>
            <div class="gbox">
              <label class="virt"><i class="ck" />Создать виртуальное поле</label>
              <div class="fr a"><span>Имя поля</span><div class="inp" /></div>
              <div class="fr b"><span>Тип</span><div class="combo"><em>123</em>Целое число (integer)<b class="dd" /></div></div>
              <div class="fr c"><span>Размер</span><div class="num">10<span class="spin"><b class="up" /><b class="dd" /></span></div><span class="prec">Точность</span><div class="num dis">3<span class="spin"><b class="up" /><b class="dd" /></span></div></div>
            </div>
          </div>
          <div class="grp two">
            <label class="gl"><i class="ck" />Обновить существующее поле</label>
            <div class="gbox"><div class="combo dis"><b class="dd" /></div></div>
          </div>
        </div>
        <div class="tabs"><span class="act">Выражение</span><span class="inact">Редактор функций</span></div>
        <div class="pane">
          <div class="left">
            <div class="etools"><button v-for="e in exprTools" :key="e.id" :class="{ dis: e.off }"><svg><use :href="'#' + e.id" /></svg></button></div>
            <div class="code"><p><span>$</span>length</p></div>
            <div class="ops"><button v-for="o in operators" :key="o">{{ o }}</button></div>
            <div class="obj"><span>Объект</span><div class="oc"><u><b class="dd" /></u></div><button class="dis"><svg viewBox="0 0 14 16"><path d="M12 1v14L1 8z" /></svg></button><button class="dis"><svg viewBox="0 0 14 16"><path d="M2 1v14l11-7z" /></svg></button></div>
            <div class="prev"><span>Просмотр:</span><span>8973,079051302135</span></div>
          </div>
          <i class="split" />
          <div class="mid">
            <div class="ms"><div class="sb"><svg><use href="#lens" /></svg>Пои...</div><button class="dis">Справка</button></div>
            <div class="fl">
              <ul><li v-for="(f, i) in functions" :key="i" :class="{ cur: f === '$length' }">{{ f }}</li></ul>
              <div class="vsb"><u><b class="up" /></u><i /><u class="bt"><b class="dd" /></u></div>
            </div>
          </div>
          <i class="split s2" />
          <article class="help">
            <h1>Функция $length</h1>
            <p><template v-for="(h, i) in helpLines" :key="i">{{ h }}<br></template></p>
            <h2>Синтаксис</h2>
            <p class="syn">$length</p>
            <h2 class="ex">Примеры</h2>
            <p class="li"><i /><code>$length</code><span>→</span><code>42.4711</code></p>
          </article>
        </div>
        <div class="info">
          <svg viewBox="0 0 38 38"><path d="M19 4c11 0 17 6 17 13 0 8-5 12-11 14l-1 7-8-7C7 29 3 24 3 18 3 9 10 4 19 4z" fill="#8f8f8f" /><path d="M17.500 1.500c10 0 16.500 6 16.500 14 0 7-5 12-11 13.500v7l-7-7C7 28.500 1 23 1 15.500c0-8 7-14 16.500-14z" fill="#fff" stroke="#777" stroke-width=".8" /><circle cx="17.500" cy="7" r="2.700" fill="#0b0bf0" /><path d="M13 12h7v11h3v2H12.500v-2h3v-9H13z" fill="#0b0bf0" /></svg>
          <p>Вы редактируете информацию в слое, который не находится в режиме редактирования. При нажатии кнопки OK режим<br>редактирования включится автоматически.</p>
        </div>
        <div class="btns"><button class="dis">OK</button><button>Отмена</button><button class="dis">Применить</button><button>Справка</button></div>
      </div>
    </section>

    <footer class="task">
      <span class="start"><svg viewBox="0 0 18 18"><path d="M0 2.500l7.500-1V8.500H0zM8.500 1.300L18 0v8.500H8.500zM0 9.500h7.500v7l-7.500-1zM8.500 9.500H18V18l-9.500-1.300z" fill="#fff" /></svg></span>
      <span v-for="t in tasks" :key="t.id" class="tk" :class="{ run: t.run, active: t.active }"><svg><use :href="'#' + t.id" /></svg><small v-if="t.cap" class="cap" :class="t.id">{{ t.cap }}</small></span>
      <div class="tray">
        <svg class="ti" viewBox="1080 766 166 32"><g fill="none" stroke="#fff" stroke-width="1.200"><path d="M1082 785l6-6 6 6" /><rect x="1119.500" y="777.500" width="7" height="10" rx="1" /><path d="M1127 781l3-2v7l-3-2M1119 775q4-3 8 0M1119 790q4 3 8 0" /><rect x="1151.500" y="777.500" width="15" height="9" /><path d="M1168 780v4" stroke-width="2" /><path d="M1187 779.500h3l4-4v13l-4-4h-3z" /><path d="M1196 779q2 3 0 6M1199 777q3.500 5 0 10M1202 776q4 6 0 12" stroke="#999" /><path d="M1225 788q0-11 13-12M1229 788q0-7 9-8M1233 788q0-3 5-4" /></g><path d="M1153 779h7v6h-7z" fill="#fff" /><circle cx="1237" cy="787" r="1.500" fill="#fff" /></svg>
        <span class="eng">ENG</span>
        <span class="clock">23:48<br>06.04.2025</span>
        <svg class="nt" viewBox="0 0 18 18"><path d="M0 0h18v13h-5v5l-5-5H0z" fill="#fff" /><path d="M3 3.500h12M3 6.500h12M3 9.500h8" stroke="#2a2623" stroke-width="1.200" /></svg>
      </div>
    </footer>
  </div>
</template>

<style>
body { overflow: hidden; }
</style>
<style scoped>
* { box-sizing: border-box; margin: 0; padding: 0; }
.desktop { position: relative; width: 1429px; height: 804px; overflow: hidden; font: 12.5px "Noto Sans", "Open Sans", sans-serif; letter-spacing: -.3px; color: #1a1a1a; background: #efefef; white-space: nowrap; }
.defs { position: absolute; }
svg { flex: none; display: block; }
i { font-style: normal; }
button { font: inherit; letter-spacing: inherit; color: inherit; border: 1px solid #b4b4b4; border-bottom-color: #a5a5a5; border-radius: 2px; background: linear-gradient(#fff, #f2f2f2); display: flex; align-items: center; justify-content: center; }
button.dis { color: #8d8d8d; border-color: #c9c9c9; }
.q18 { width: 18px; height: 18px; }
.dd { flex: none; width: 0; height: 0; border: 4.500px solid transparent; border-top: 5px solid #555; border-bottom: 0; }
.up { flex: none; width: 0; height: 0; border: 4.500px solid transparent; border-bottom: 5px solid #555; border-top: 0; }
.rt { flex: none; width: 0; height: 0; border: 4px solid transparent; border-left: 5px solid #444; border-right: 0; }
.dim { border-top-color: #8d8d8d; }
.none { visibility: hidden; }
.ck { flex: none; width: 15px; height: 15px; border: 1px solid #bdbdbd; background: #fff; display: block; }
.ck.dis { background: #efefef; }
.ck svg { width: 13px; height: 13px; overflow: visible; }
.ck path { fill: none; stroke: #000; stroke-width: 2.200; }
.main { width: 1429px; height: 759px; display: flex; flex-direction: column; }
.mtitle { height: 25px; background: #fff; display: flex; align-items: center; padding-left: 2px; color: #8e8e8e; flex: none; }
.mt { margin-left: 3px; letter-spacing: .15px; }
.winctl { width: 130px; height: 24px; margin-left: auto; margin-right: 13px; }
.menu { height: 23px; display: flex; align-items: center; padding-left: 11px; gap: 16px; color: #929292; border-bottom: 1px solid #d4d4d4; flex: none; letter-spacing: .12px; }
.bar { height: 43.250px; flex: none; display: flex; align-items: center; background: linear-gradient(#fbfbfb, #ededed); border-bottom: 1px solid #c4c4c4; padding-left: 6px; }
.r1, .r2, .r3 { padding-top: 1px; }
.r2 { border-bottom: 1px solid #aaa; }
.r4 { padding-top: 2px; }
.grip { flex: none; width: 5px; height: 20px; background: radial-gradient(circle, #aaa 35%, transparent 45%) 0 0/3px 3.600px; }
.grip + .slot { margin-left: 3.700px; }
.slot { position: relative; flex: none; width: 36.700px; height: 34px; display: flex; align-items: center; justify-content: center; }
.glyph-a { position: absolute; left: 21px; top: 13px; font: 600 12px/18px "Noto Sans", sans-serif; color: #333; }
.glyph-q { position: absolute; left: 17px; top: 7px; font: 16px/20px "Liberation Serif", serif; color: #fff; letter-spacing: 0; }
.slot svg { width: 24px; height: 24px; }
.slot svg.big { width: 26px; height: 26px; }
.slot svg.huge { width: 28px; height: 26px; }
.off svg, .faint { opacity: .36; filter: grayscale(.5); }
.g2 { margin-left: 11px; }
.grip + .slot.pressed { width: 36px; border: 1px solid #a9a9a9; border-radius: 2px; background: #dcdcdc; margin-left: 3.500px; }
.late { margin-left: 4px; }
.right { margin-left: auto; display: flex; align-items: center; }
.r1 .right { padding-right: 16.500px; }
.r1 .right .dd { margin: 0 3px 0 1px; }
.r1 .right .slot { width: 36.500px; }
.r1 .right .slot:has(+ .dd) { width: 38px; }
.r2 .right { padding-right: 17px; }
.r2 .right .grip + .slot { margin-left: 4px; }
.r2 .right .slot + .grip { margin-left: 8.500px; }
.r3 .dd, .r4 .dd { margin: 0 4.500px 0 1px; }
.work { flex: 1; min-height: 0; display: flex; }
.side { width: 57px; flex: none; background: linear-gradient(90deg, #fafafa, #ededed); border-right: 1px solid #b8b8b8; display: flex; flex-direction: column; padding-top: 6px; }
.hgrip { width: 20px; height: 6px; margin: 0 0 4.500px 21px; background: radial-gradient(circle, #aaa 35%, transparent 45%) 0 0/3.600px 3px; flex: none; }
.st { height: 35.700px; display: flex; align-items: center; padding-left: 15.500px; flex: none; }
.st svg { width: 26px; height: 25px; }
.st.arrow { padding: 0 0 0 10px; }
.st.arrow svg { margin-right: 6px; }
.st.corner .dd { margin: 23px 0 0 -4px; }
.panels { width: 290px; flex: none; padding-left: 2px; }
h4 { font-weight: 400; font-size: 12.500px; line-height: 27px; padding-left: 4px; }
.ptools { display: flex; gap: 12px; padding: 4px 0 0 7px; height: 32px; }
.ptools svg { width: 17px; height: 17px; }
.tree, .layers { list-style: none; background: #fff; border: 1px solid #c2c2c2; overflow: hidden; }
.tree { height: 127px; font-size: 13px; }
.tree li { height: 20.100px; display: flex; align-items: center; padding-left: 6px; }
.tree li svg { width: 17px; height: 17px; margin: 0 8px 0 9px; }
.lh { margin-top: 6px; }
.ptools.two { height: 30px; }
.two svg { margin-right: -1px; }
.layers { height: 257px; }
.layers li { height: 20.200px; display: flex; align-items: center; padding-left: 7px; font-weight: 700; font-size: 13px; }
.layers .ck { margin: 0 8px 0 9.500px; }
.layers .sym { width: 16px; height: 15px; margin-right: 8px; flex: none; }
.layers li.gone { font-style: italic; color: #8a8a8a; }
.layers .cur { background: #efefef; text-decoration: underline; }
.layers .sym.dot { width: 9px; height: 9px; border-radius: 5px; background: #76858a; margin: 0 11.500px 0 3.500px; }
.layers .sym.brown, .layers .sym.orange, .layers .sym.purple { height: 2px; background: #bf8f80; }
.layers .sym.orange { background: #f89b3d; }
.layers .sym.purple { background: #9d75ab; }
.layers .sym.fill { width: 18px; height: 18px; background: #bdce4c; border: 1px solid #829134; margin: 0 7px 0 -1px; }
.canvas { flex: 1; display: flex; flex-direction: column; align-items: flex-end; }
.msg { width: 100%; height: 35px; background: #e5f3fe; border: 1px solid #b9d3e8; border-width: 2px 0; display: flex; align-items: center; justify-content: flex-end; padding-right: 25px; flex: none; }
.msg button { width: 96px; height: 24px; font-size: 12.500px; justify-content: flex-end; padding-right: 4px; margin-right: 28px; }
.msg svg { width: 20px; height: 20px; }
.map { width: 274px; height: 471px; }
.status { height: 32px; flex: none; display: flex; justify-content: space-between; align-items: center; padding: 3px 7px 2px 5px; }
.find { width: 223px; height: 25px; border: 1px solid #aaa; border-radius: 2px; background: #fff; color: #777; display: flex; align-items: center; padding-left: 9px; letter-spacing: -.15px; }
.find svg { width: 14px; height: 14px; margin-right: 8px; }
.sr { display: flex; align-items: center; }
.scale { width: 60px; height: 22px; background: #fff; border: 1px solid #aaa; border-radius: 2px; display: flex; justify-content: flex-end; }
.spin { width: 16px; border-left: 1px solid #aaa; background: #f6f6f6; display: flex; flex-direction: column; align-items: center; justify-content: center; gap: 3px; }
.ot { margin-left: 6px; width: 60px; letter-spacing: -.6px; }
.scale + .ck { margin-left: 9px; }
.gg { width: 17px; height: 15px; margin: 0 2px 0 17px; }
.epsg { width: 61px; letter-spacing: -.3px; }
.ch { width: 19px; height: 18px; margin-left: 25px; }

.attr { position: absolute; left: 140px; top: 187px; width: 1160px; height: 474px; border: 1px solid #9f9f9f; background: #efefef; box-shadow: 0 3px 9px rgba(0,0,0,.28); display: flex; flex-direction: column; padding: 0 2px 0 1px; }
.attr header { height: 32px; margin: 0 -2px 0 -1px; background: #fff; display: flex; align-items: center; padding-left: 8px; color: #939393; flex: none; }
.attr header span { margin-left: 7px; letter-spacing: .2px; }
.actl { width: 130px; height: 32px; margin-left: auto; margin-right: 13px; }
.atools { height: 36px; flex: none; display: flex; align-items: center; padding-left: 7px; gap: 11px; }
.atools svg { width: 17px; height: 18px; }
.vs { width: 1px; height: 14px; background: #ccc; }
.thead, .trow { display: flex; flex: none; }
.thead { height: 22px; font-size: 13px; letter-spacing: 0; background: linear-gradient(#fafafa, #eaeaea); border-bottom: 1px solid #bbb; text-align: center; line-height: 23px; }
.thead .corner { width: 11px; }
.thead span, .trow span { width: 112px; border-right: 1px solid #c9c9c9; flex: none; }
.thead .flex, .trow .flex { flex: 1; }
.thead .end, .trow .end { width: 27px; border: 0; }
.thead .lt, .trow .lt { width: 113px; }
.thead .lt { padding-left: 4px; }
.trow { height: 33px; background: #fff; border-bottom: 1px solid #ccc; color: #888; font-style: italic; line-height: 33px; font-size: 13px; letter-spacing: -.1px; }
.trow span { padding-left: 5px; }
.trow .lt { padding-left: 6px; }
.trow i { width: 11px; background: #f2f2f2; border-right: 1px solid #aaa; color: #222; font-size: 13px; padding-left: 2px; line-height: 36px; }
.tbody { flex: 1; background: linear-gradient(90deg, #efefef 11px, #fff 11px); }
.hs { height: 15px; background: #e4e4e4; display: flex; align-items: center; justify-content: space-between; flex: none; }
.hs i { flex: 1; }
.lt-arrow, .rt-arrow { width: 15px; height: 15px; background: #fafafa; border-right: 1px solid #bbb; display: flex; align-items: center; justify-content: center; }
.rt-arrow { border-right: 0; border-left: 1px solid #bbb; background: #f2f2f2; }
.lt-arrow::before { content: ""; border: 4px solid transparent; border-right: 5px solid #444; border-left: 0; }
.rt-arrow::before { content: ""; border: 4px solid transparent; border-left: 5px solid #444; border-right: 0; }
.afoot { height: 34px; flex: none; display: flex; align-items: center; justify-content: space-between; padding: 1px 3px 0 2px; }
.afoot button { width: 108px; height: 26px; justify-content: flex-start; padding-left: 4px; border-radius: 3px; letter-spacing: -.4px; }
.afoot button svg { width: 15px; height: 16px; margin-right: 3px; }
.afoot button .dd { border-width: 4px 3px 0; margin: 13px 0 0 5px; }
.afoot div { display: flex; align-items: center; gap: 6px; }
.afoot div svg { width: 15px; height: 15px; }
.afoot div span { width: 27px; height: 25px; border: 1px solid #aaa; background: #dcdcdc; border-radius: 2px; display: flex; align-items: center; justify-content: center; }

.dlg { position: absolute; left: 338px; top: 26px; width: 818px; height: 734px; border: 1px solid #777; border-bottom: 0; background: #efefef; box-shadow: 0 4px 16px rgba(0,0,0,.5); color: #111; letter-spacing: -.42px; }
.dlg header { height: 32px; background: #fff; display: flex; align-items: center; padding: 0 12px 0 8px; }
.dlg header span { margin-left: 4px; letter-spacing: .01px; }
.dx { width: 12px; height: 12px; margin-left: auto; }
.dbody { padding: 16px 0 0 12px; display: flex; flex-direction: column; }
.upd { display: flex; align-items: center; height: 16px; color: #898989; gap: 6px; }
.groups { display: flex; gap: 8px; margin: 10px 0 0 1px; }
.one { width: 329px; } .two { width: 453px; }
.gl { height: 16px; display: flex; align-items: center; gap: 7px; font-weight: 700; margin-bottom: 3px; color: #000; padding-top: 2px; letter-spacing: -.02px; }
.gl .ck { margin-top: -4px; }
.grp { padding-top: 1px; }
.gbox { height: 123px; border: 1px solid #d6d6d6; border-radius: 2px; background: #ececec; padding: 15px 5px 0; }
.virt { display: flex; align-items: center; gap: 5px; height: 16px; }
.fr { display: flex; align-items: center; }
.fr > span { width: 60px; }
.a { margin-top: 6px; height: 25px; } .b { margin-top: 3px; height: 27px; } .c { margin-top: 5px; height: 21px; }
.inp { flex: 1; height: 25px; background: #fff; border: 1px solid #b2b2b2; border-radius: 3px; }
.combo { flex: 1; height: 27px; border: 1px solid #b2b2b2; border-radius: 3px; background: linear-gradient(#fcfcfc, #ebebeb); display: flex; align-items: center; padding: 0 8px 0 6px; letter-spacing: -.35px; }
.combo .dd { margin-left: auto; }
.combo em { font-style: normal; font-weight: 700; color: #555; font-size: 10.500px; margin: -3px 3px 0 0; letter-spacing: 0; }
.combo.dis { margin-top: 36px; border-color: #cdcdcd; }
.dis .dd { border-top-color: #999; } .dis .up { border-bottom-color: #999; }
.num { width: 81px; height: 21px; border: 1px solid #b2b2b2; border-radius: 3px; background: #fff; display: flex; justify-content: space-between; padding-left: 5px; line-height: 19px; }
.num .up { border-bottom-color: #999; }
.num.dis { background: #efefef; color: #888; width: 82px; }
.fr .prec { width: 94.500px; padding-left: 7px; letter-spacing: -.3px; }
.tabs { display: flex; align-items: flex-end; height: 26px; margin-top: 7px; width: 791px; border-bottom: 1px solid #bbb; }
.tabs span { border: 1px solid #bbb; border-bottom: 0; text-align: center; height: 23px; line-height: 24px; width: 131px; background: #e7e7e7; }
.tabs .act { width: 93px; height: 26px; line-height: 27px; margin-bottom: -1px; background: #fbfbfb; padding-right: 2px; }
.tabs .inact { border-left: 0; }
.pane { display: flex; padding: 12px 0 0 10px; height: 344px; }
.left { width: 272px; }
.etools { display: flex; gap: 2.800px; }
.etools button { width: 26.200px; height: 25px; }
.etools svg { width: 18px; height: 18px; margin-top: -2px; }
.etools .dis svg { opacity: .5; }
.code { height: 206px; margin-top: 7px; background: #fff; border: 1px solid #b5b5b5; border-right: 0; padding: 0 1px; }
.code p { background: #ededed; height: 16px; font: 14.400px/17px "Liberation Mono", monospace; letter-spacing: 0; color: #7898c5; padding-left: 1px; }
.code span { color: #777; }
.ops { display: flex; justify-content: space-between; margin-top: 8px; }
.ops button { width: 25px; height: 25px; }
.obj { display: flex; align-items: center; margin-top: 9px; height: 25px; }
.obj > span { width: 48px; }
.oc { width: 157px; height: 25px; border: 1px solid #b2b2b2; border-radius: 3px; background: #fff; display: flex; justify-content: flex-end; }
.oc u { width: 23px; border-left: 1px solid #bbb; background: #f8f8f8; display: flex; align-items: center; justify-content: center; }
.obj button { width: 27px; height: 26px; margin-left: 6.500px; }
.obj button svg { width: 13px; height: 16px; }
.obj path { fill: #dcdfe1; stroke: #b4b8bb; }
.prev { display: flex; gap: 8px; margin-top: 7px; }
.prev span:last-child { letter-spacing: -.42px; }
.split { width: 2px; height: 18px; margin: 158px 11px 0 12px; background: radial-gradient(circle, #bbb 35%, transparent 45%) 0 0/2px 3.600px; }
.s2 { margin: 158px 11px 0 1px; }
.mid { width: 169px; }
.ms { display: flex; gap: 7px; }
.sb { width: 73px; height: 25px; background: #fff; border: 1px solid #b2b2b2; border-radius: 3px; color: #888; display: flex; align-items: center; padding-left: 9px; }
.sb svg { width: 14px; height: 14px; margin-right: 8px; }
.ms button { width: 89px; height: 25px; }
.fl { display: flex; height: 296px; margin-top: 7px; border: 1px solid #c5c5c5; background: #fff; overflow: hidden; }
.fl ul { flex: 1; list-style: none; font: 13px/17.900px "Noto Sans", sans-serif; letter-spacing: -.25px; overflow: hidden; }
.fl li { height: 17.900px; padding-left: 48px; line-height: 17px; }
.fl .cur { background: #eee; }
.vsb { width: 16px; background: #e3e3e3; border-left: 1px solid #ccc; display: flex; flex-direction: column; justify-content: space-between; }
.vsb u { height: 15px; background: #fafafa; border-bottom: 1px solid #ccc; display: flex; align-items: center; justify-content: center; }
.vsb u.bt { border: 0; border-top: 1px solid #ccc; }
.vsb i { height: 30px; margin-bottom: 70px; background: #fafafa; border-bottom: 1px solid #bbb; }
.help { width: 291px; height: 328px; border: 1px solid #ccc; border-top: 0; background: #fff; padding: 5px 4px 0 5px; font: 12.800px/16.750px "Open Sans", sans-serif; letter-spacing: -.29px; }
.help h1 { font-size: 15.500px; line-height: 20px; background: #f6f6f6; color: #93b023; letter-spacing: -.65px; }
.help p { margin-top: 14px; }
.help h2 { font-size: 12.800px; line-height: 17px; margin-top: 13px; background: #f6f6f6; color: #93b023; letter-spacing: -.4px; }
.help .syn { font-weight: 700; color: #0a6099; margin-top: 13px; }
.help .li { display: flex; align-items: center; padding-left: 35px; color: #333; }
.li i { width: 6px; height: 6px; border-radius: 3px; background: #000; margin-right: 3px; }
.li code { font: 12.200px "Liberation Mono", monospace; letter-spacing: 0; }
.li span { margin: 0 2px; font-family: "DejaVu Sans", sans-serif; font-size: 13px; }
.info { display: flex; padding: 39px 0 0 10px; height: 111px; }
.info svg { width: 37px; height: 37px; margin-top: 1px; }
.info p { margin: 5px 0 0 41px; line-height: 15.500px; }
.btns { display: flex; gap: 7px; margin-left: 414px; }
.btns button { width: 89px; height: 25px; }

.task { position: absolute; left: 0; top: 759px; width: 1429px; height: 45px; background: #2a2623; color: #fff; display: flex; }
.start { width: 52.500px; display: flex; align-items: center; padding-left: 18px; }
.start svg { width: 18px; height: 18px; }
.tk { position: relative; width: 55.850px; display: flex; align-items: center; justify-content: center; border-bottom: 1px solid transparent; }
.tk svg { width: 28px; height: 28px; }
.cap { position: absolute; left: 0; right: 0; top: 12px; text-align: center; line-height: 20px; letter-spacing: -.2px; font-size: 14px; }
.cap.t-zoom { font-size: 8.500px; font-weight: 700; }
.cap.t-ai { color: #ff9a00; font-weight: 700; }
.cap.t-ps { color: #00c8ff; }
.cap.t-telegram { left: 13px; top: 22px; font-size: 9.500px; }
.run { background: linear-gradient(#76b9ed, #76b9ed) 5px 100%/46px 3px no-repeat border-box; }
.active { background: linear-gradient(#76b9ed, #76b9ed) 3px 100%/53px 3px no-repeat border-box, linear-gradient(#5d5a58, #5d5a58) 3px 0/49px 45px no-repeat border-box, linear-gradient(#45494c, #45494c) 52px 0/4px 45px no-repeat border-box; }
.tray { margin-left: auto; display: flex; align-items: center; padding-right: 28px; }
.ti { width: 166px; height: 32px; }
.eng { margin-left: 10px; width: 26px; letter-spacing: -.2px; }
.clock { width: 80px; margin-left: 6px; text-align: center; line-height: 21px; letter-spacing: -.1px; font-size: 12.500px; }
.nt { width: 19px; height: 19px; margin-left: 14px; }
</style>
